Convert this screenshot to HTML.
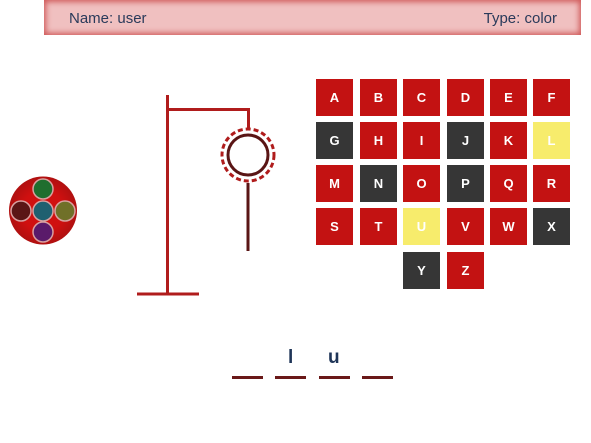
<!DOCTYPE html>
<html><head><meta charset="utf-8"><style>
body{margin:0;width:591px;height:443px;background:#fff;position:relative;overflow:hidden;font-family:"Liberation Sans",sans-serif}
.hdr{position:absolute;left:44px;top:0;width:537px;height:35px;background:#f0c0c0;box-shadow:inset 0 0 6px 2px #d05a5a;color:#2a3a5a;font-size:15px}
.hdr span{position:absolute;top:10px}
.t{position:absolute;width:37px;height:37px;color:#fff;font-weight:bold;font-size:13px;text-align:center;line-height:37px}
.r{background:#c31212}.d{background:#363636}.y{background:#f7ec6c}
.u{position:absolute;top:376px;width:31px;height:3px;background:#6a1818}
.l{position:absolute;top:347px;font-size:19px;font-weight:bold;color:#1f3558}
</style></head><body>
<div class="hdr"><span style="left:25px">Name: user</span><span style="right:24px">Type: color</span></div>
<svg width="591" height="443" style="position:absolute;left:0;top:0">
<defs><radialGradient id="g" cx="50%" cy="50%" r="50%"><stop offset="0.6" stop-color="#d01010"/><stop offset="1" stop-color="#b01010"/></radialGradient></defs>
<circle cx="43" cy="210.5" r="34" fill="url(#g)"/>
<g stroke="#d8a0a0" stroke-width="1.5">
<circle cx="43" cy="189" r="10" fill="#1f6e2e"/>
<circle cx="21" cy="211" r="10" fill="#5a1616"/>
<circle cx="43" cy="211" r="10" fill="#1f6070"/>
<circle cx="65" cy="211" r="10" fill="#707028"/>
<circle cx="43" cy="232" r="10" fill="#5a1a6a"/>
</g>
<g stroke="#b01c1c" stroke-width="3" fill="none">
<line x1="167.5" y1="95" x2="167.5" y2="295"/>
<line x1="137" y1="294" x2="199" y2="294"/>
<polyline points="167,109.5 248.5,109.5 248.5,130"/>
<circle cx="248" cy="155" r="26" stroke-dasharray="5 3"/>
</g>
<circle cx="248" cy="155" r="20" stroke="#5a1515" stroke-width="3" fill="none"/>
<line x1="248" y1="183" x2="248" y2="251" stroke="#5a1515" stroke-width="3"/>
</svg>
<div class="t r" style="left:316px;top:79px">A</div><div class="t r" style="left:360px;top:79px">B</div><div class="t r" style="left:403px;top:79px">C</div><div class="t r" style="left:447px;top:79px">D</div><div class="t r" style="left:490px;top:79px">E</div><div class="t r" style="left:533px;top:79px">F</div>
<div class="t d" style="left:316px;top:122px">G</div><div class="t r" style="left:360px;top:122px">H</div><div class="t r" style="left:403px;top:122px">I</div><div class="t d" style="left:447px;top:122px">J</div><div class="t r" style="left:490px;top:122px">K</div><div class="t y" style="left:533px;top:122px">L</div>
<div class="t r" style="left:316px;top:165px">M</div><div class="t d" style="left:360px;top:165px">N</div><div class="t r" style="left:403px;top:165px">O</div><div class="t d" style="left:447px;top:165px">P</div><div class="t r" style="left:490px;top:165px">Q</div><div class="t r" style="left:533px;top:165px">R</div>
<div class="t r" style="left:316px;top:208px">S</div><div class="t r" style="left:360px;top:208px">T</div><div class="t y" style="left:403px;top:208px">U</div><div class="t r" style="left:447px;top:208px">V</div><div class="t r" style="left:490px;top:208px">W</div><div class="t d" style="left:533px;top:208px">X</div>
<div class="t d" style="left:403px;top:252px">Y</div><div class="t r" style="left:447px;top:252px">Z</div>
<div class="u" style="left:232px"></div><div class="u" style="left:275px"></div><div class="u" style="left:319px"></div><div class="u" style="left:362px"></div>
<div class="l" style="left:288px">l</div><div class="l" style="left:328px">u</div>
</body></html>
